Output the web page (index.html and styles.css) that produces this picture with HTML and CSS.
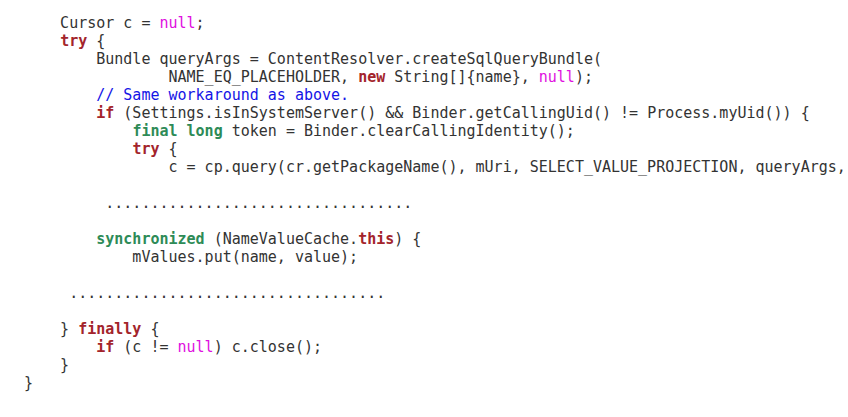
FILE: index.html
```html
<!DOCTYPE html>
<html>
<head>
<meta charset="utf-8">
<link rel="stylesheet" href="styles.css">
</head>
<body>
<pre class="code">    Cursor c = <span class="lit">null</span>;
    <span class="kw">try</span> {
        Bundle queryArgs = ContentResolver.createSqlQueryBundle(
                NAME_EQ_PLACEHOLDER, <span class="kw">new</span> String[]{name}, <span class="lit">null</span>);
        <span class="cm">// Same workaround as above.</span>
        <span class="kw">if</span> (Settings.isInSystemServer() &amp;&amp; Binder.getCallingUid() != Process.myUid()) {
            <span class="ty">final</span> <span class="ty">long</span> token = Binder.clearCallingIdentity();
            <span class="kw">try</span> {
                c = cp.query(cr.getPackageName(), mUri, SELECT_VALUE_PROJECTION, queryArgs,

         ..................................

        <span class="ty">synchronized</span> (NameValueCache.<span class="kw">this</span>) {
            mValues.put(name, value);

     ...................................

    } <span class="kw">finally</span> {
        <span class="kw">if</span> (c != <span class="lit">null</span>) c.close();
    }
}
</pre>
</body>
</html>
```

FILE: styles.css
```css
html, body {
  margin: 0;
  padding: 0;
  background: #ffffff;
}
body {
  padding: 14px 0 0 24px;
}
.code {
  margin: 0;
  font-family: "DejaVu Sans Mono", monospace;
  font-size: 15px;
  line-height: 18px;
  color: #333333;
  white-space: pre;
}
.kw {
  color: #a3242b;
  font-weight: bold;
}
.ty {
  color: #2e8b57;
  font-weight: bold;
}
.lit {
  color: #e010e0;
}
.cm {
  color: #1414e6;
}
```
